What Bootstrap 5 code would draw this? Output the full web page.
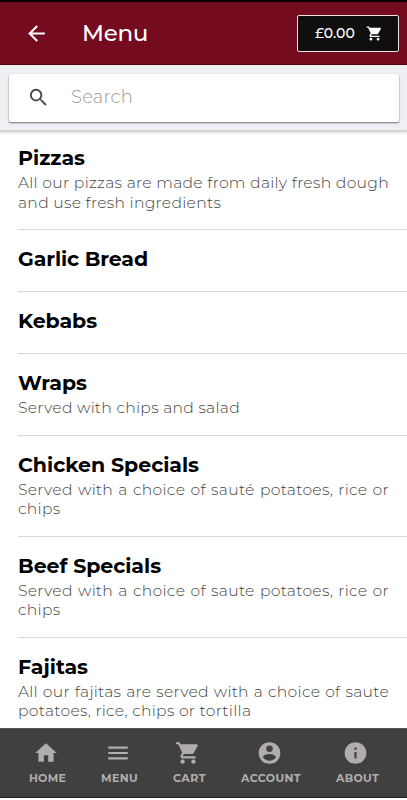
<!DOCTYPE html>
<html lang="en">
<head>
<meta charset="utf-8">
<meta name="viewport" content="width=device-width, initial-scale=1">
<title>Menu</title>
<link href="https://cdn.jsdelivr.net/npm/bootstrap@5.3.0/dist/css/bootstrap.min.css" rel="stylesheet">
<style>
body{font-family:Montserrat,Inter,"Open Sans",sans-serif;height:800px;overflow:hidden;background:#fff;color:#000}
svg{display:block;fill:currentColor;flex:none}
.app-head{height:65px;background:#740b1e;border-top:2px solid #080002;border-bottom:1px solid #57000f;padding:0 8px 0 24px;color:#fff}
.app-head h1{font-size:23px;font-weight:500;line-height:30px;margin-left:33px}
.t{display:inline-block;white-space:nowrap}
.basket{width:102px;height:37px;background:#110e10;border:1px solid #f2dfe2;border-radius:2px;color:#fff;padding:0 15px 0 17px;font-size:14px;font-weight:500}
.search-bar{height:67px;background:#efeff4;border-bottom:2px solid #d6d6d8;padding:9px 8px 0 9px;box-shadow:0 1px 2px #0002}
.search-box{height:48px;background:#fff;border-radius:2px;box-shadow:0 1px 2px #0008;padding:0 0 1px 18px;color:#4b4b4b}
.search-box .t{margin-left:21px;font-size:18px;font-weight:300;color:#999}
.dish-list{height:596px;overflow:hidden;padding-left:18px}
.dish{border-bottom:1px solid #d9d9d9;padding:14.2px 18px 17px 0}
.dish:first-child{padding-top:11.3px}
.dish h2{font-size:20.5px;font-weight:700;line-height:29.8px;margin:0}
.dish p{font-size:15.6px;letter-spacing:.28px;font-weight:300;line-height:19.5px;color:#444;margin:0;text-align:justify}
.dish:last-child{border:0}
.tabs{height:70px;background:#404040;border-top:1px solid #555;border-bottom:1px solid #222;color:#b1adad;padding:0 28px 0 29px}
.tab{height:68px;padding-top:11px;font-size:11px;font-weight:700;line-height:14px}
.tab .t{margin-top:5px}
.tab svg{margin-right:4px}
</style>
<script src="https://cdn.jsdelivr.net/npm/bootstrap@5.3.0/dist/js/bootstrap.bundle.min.js"></script>
</head>
<body>
<header class="app-head d-flex align-items-center">
<svg width="25" height="25" viewBox="0 0 24 24"><path d="M20 11H7.83l5.59-5.59L12 4l-8 8 8 8 1.41-1.41L7.83 13H20z"/></svg>
<h1 class="mb-0"><span class="t" data-w="66">Menu</span></h1>
<div class="basket d-flex align-items-center justify-content-between ms-auto"><span class="t" data-w="40">£0.00</span><svg width="17" height="17" viewBox="0 0 24 24"><path d="M7 18a2 2 0 1 0 0 4 2 2 0 0 0 0-4zM1 2v2h2l3.6 7.59-1.35 2.45C4.52 15.37 5.48 17 7 17h12v-2H7.42l-.17-.25L8.1 13h7.45c.75 0 1.41-.41 1.75-1.03l3.58-6.49A1 1 0 0 0 20 4H5.21l-.94-2zM17 18a2 2 0 1 0 0 4 2 2 0 0 0 0-4z"/></svg></div>
</header>
<div class="search-bar"><div class="search-box d-flex align-items-center">
<svg width="23" height="23" viewBox="0 0 24 24"><path d="M15.5 14h-.79l-.28-.27A6.5 6.5 0 1 0 13.73 14.43l.27.28v.79l5 4.99L20.49 19zM9.5 14a4.5 4.5 0 1 1 0-9 4.5 4.5 0 0 1 0 9z"/></svg>
<span class="t" data-w="62">Search</span></div></div>
<main class="dish-list">
<section class="dish"><h2><span class="t" data-w="67">Pizzas</span></h2><p>All our pizzas are made from daily fresh dough and use fresh ingredients</p></section>
<section class="dish"><h2><span class="t" data-w="130">Garlic Bread</span></h2></section>
<section class="dish"><h2><span class="t" data-w="79">Kebabs</span></h2></section>
<section class="dish"><h2><span class="t" data-w="69">Wraps</span></h2><p>Served with chips and salad</p></section>
<section class="dish"><h2><span class="t" data-w="181">Chicken Specials</span></h2><p>Served with a choice of sauté potatoes, rice or chips</p></section>
<section class="dish"><h2><span class="t" data-w="143">Beef Specials</span></h2><p>Served with a choice of saute potatoes, rice or chips</p></section>
<section class="dish"><h2><span class="t" data-w="70">Fajitas</span></h2><p>All our fajitas are served with a choice of saute potatoes, rice, chips or tortilla</p></section>
</main>
<nav class="tabs d-flex justify-content-between">
<div class="tab d-flex flex-column align-items-center"><svg width="26" height="26" viewBox="0 0 24 24"><path d="M10 20v-6h4v6h5v-8h3L12 3 2 12h3v8z"/></svg><span class="t" data-w="37">HOME</span></div>
<div class="tab d-flex flex-column align-items-center"><svg width="28" height="26" viewBox="0 0 24 24"><path d="M3 18h18v-2H3zm0-5h18v-2H3zm0-7v2h18V6z"/></svg><span class="t" data-w="37">MENU</span></div>
<div class="tab d-flex flex-column align-items-center"><svg width="26" height="26" viewBox="0 0 24 24"><path d="M7 18a2 2 0 1 0 0 4 2 2 0 0 0 0-4zM1 2v2h2l3.6 7.59-1.35 2.45C4.52 15.37 5.48 17 7 17h12v-2H7.42l-.17-.25L8.1 13h7.45c.75 0 1.41-.41 1.75-1.03l3.58-6.49A1 1 0 0 0 20 4H5.21l-.94-2zM17 18a2 2 0 1 0 0 4 2 2 0 0 0 0-4z"/></svg><span class="t" data-w="33">CART</span></div>
<div class="tab d-flex flex-column align-items-center"><svg width="27" height="26" viewBox="0 0 24 24"><path fill-rule="evenodd" d="M12 2a10 10 0 1 0 0 20 10 10 0 0 0 0-20zm0 3a3 3 0 1 1 0 6 3 3 0 0 1 0-6zm0 14.2a7.2 7.2 0 0 1-6-3.22c.03-1.99 4-3.08 6-3.08s5.97 1.09 6 3.08a7.2 7.2 0 0 1-6 3.22z"/></svg><span class="t" data-w="60">ACCOUNT</span></div>
<div class="tab d-flex flex-column align-items-center"><svg width="27" height="26" viewBox="0 0 24 24"><path fill-rule="evenodd" d="M12 2a10 10 0 1 0 0 20 10 10 0 0 0 0-20zm1 15h-2v-6h2zm0-8h-2V7h2z"/></svg><span class="t" data-w="43">ABOUT</span></div>
</nav>
<script>
// Even out label tracking so each label fills its intended width.
document.querySelectorAll('.t[data-w]').forEach(function(e){
  var n=e.textContent.length, d=e.dataset.w-e.getBoundingClientRect().width;
  e.style.letterSpacing=(d/n)+'px';
});
</script>
</body>
</html>
